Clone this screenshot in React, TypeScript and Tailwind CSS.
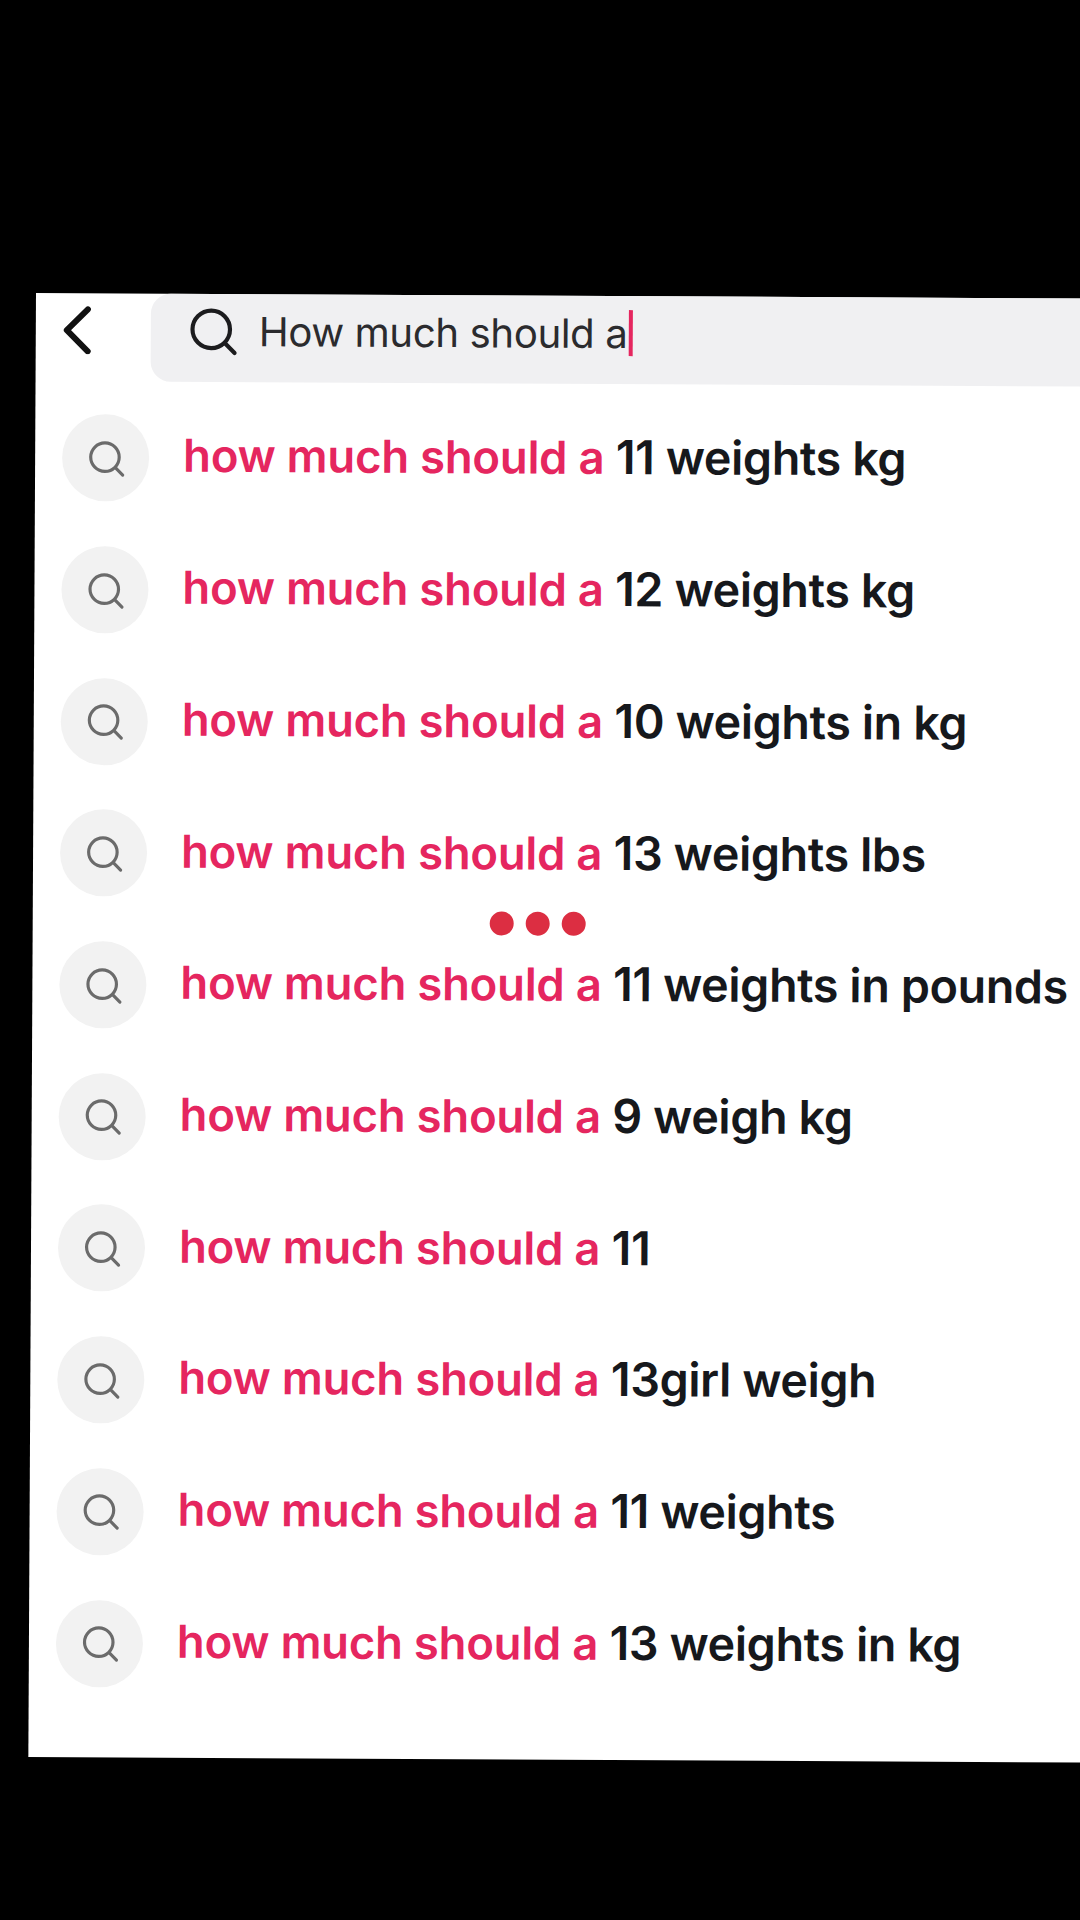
const rows = [
  "11 weights kg",
  "12 weights kg",
  "10 weights in kg",
  "13 weights lbs",
  "11 weights in pounds",
  "9 weigh kg",
  "11",
  "13girl weigh",
  "11 weights",
  "13 weights in kg",
];

function SearchIcon({ className }: { className: string }) {
  return (
    <svg viewBox="0 0 48 48" fill="none" stroke="currentColor" strokeLinecap="round" className={className}>
      <circle cx="22.5" cy="22.5" r="18" strokeWidth="4" />
      <path d="M36 36l9 9" strokeWidth="4" />
    </svg>
  );
}

export default function App() {
  return (
    <div className="h-[1920px] w-[1080px] overflow-hidden bg-black pt-[293px] pl-[36px] font-['Inter',sans-serif]">
      <div className="relative h-[1464px] w-[1100px] origin-top-left rotate-[0.3deg] bg-white">
        <div className="flex h-[90px] items-start">
          <div className="flex w-[115px] justify-start pt-[13px] pl-[25px]">
            <svg viewBox="0 0 32 48" fill="none" stroke="#111" strokeWidth="6" strokeLinecap="round" strokeLinejoin="round" className="h-[48px] w-[32px]">
              <path d="M27 3L6 24l21 21" />
            </svg>
          </div>
          <div className="flex h-[88px] flex-1 items-start rounded-[20px] bg-[#f0f0f2] pt-[12px] pl-[37px]">
            <SearchIcon className="h-[50px] w-[50px] text-[#1c1c1e]" />
            <span className="mt-[6px] ml-[21px] text-[40.2px] leading-none tracking-[-0.4px] text-[#2b2b2e]">How much should a</span>
            <span className="mt-[2px] ml-[1px] h-[46px] w-[4px] bg-[#e5265f]" />
          </div>
        </div>
        <div className="mt-[9px] flex flex-col">
          {rows.map((row) => (
            <div key={row} className="flex h-[131.7px] items-center pl-[27px]">
              <div className="flex h-[87px] w-[87px] shrink-0 items-center justify-center rounded-full bg-[#f2f2f2]">
                <SearchIcon className="h-[38px] w-[38px] text-[#6b6b6b]" />
              </div>
              <span className="mb-[6px] ml-[34px] whitespace-nowrap text-[46.7px] leading-none font-semibold tracking-[-0.4px] text-[#16181c]">
                <span className="text-[45.5px] tracking-[-0.25px] text-[#e5265f]">how much should a</span> {row}
              </span>
            </div>
          ))}
        </div>
        <div className="absolute top-[616px] left-[457px] flex gap-[12px]">
          <span className="h-[24px] w-[24px] rounded-full bg-[#dc2e42]" />
          <span className="h-[24px] w-[24px] rounded-full bg-[#dc2e42]" />
          <span className="h-[24px] w-[24px] rounded-full bg-[#dc2e42]" />
        </div>
      </div>
    </div>
  );
}
